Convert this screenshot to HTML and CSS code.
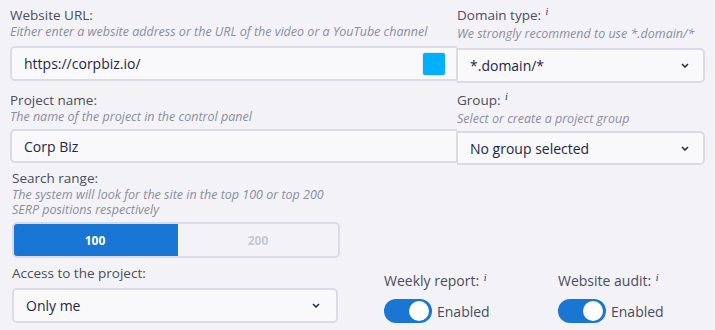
FILE: index.html
```html
<!DOCTYPE html>
<html>
<head>
<meta charset="utf-8">
<link rel="stylesheet" href="styles.css">
</head>
<body>
<div class="page">
  <div class="row">
    <div class="field">
      <div class="label">Website URL:</div>
      <div class="hint">Either enter a website address or the URL of the video or a YouTube channel</div>
      <div class="input input-left">
        <span class="value">https://corpbiz.io/</span>
        <span class="swatch"></span>
      </div>
    </div>
    <div class="field">
      <div class="label">Domain type: <i class="info">i</i></div>
      <div class="hint">We strongly recommend to use *.domain/*</div>
      <div class="input input-right">
        <span class="value">*.domain/*</span>
        <svg class="chev" width="8" height="5" viewBox="0 0 8 5"><path d="M1 1l3 3 3-3" fill="none" stroke="#1f2547" stroke-width="1.5"/></svg>
      </div>
    </div>
  </div>
  <div class="row row2">
    <div class="field">
      <div class="label">Project name:</div>
      <div class="hint">The name of the project in the control panel</div>
      <div class="input input-left short">
        <span class="value">Corp Biz</span>
      </div>
    </div>
    <div class="field">
      <div class="label">Group: <i class="info">i</i></div>
      <div class="hint">Select or create a project group</div>
      <div class="input input-right short">
        <span class="value">No group selected</span>
        <svg class="chev" width="8" height="5" viewBox="0 0 8 5"><path d="M1 1l3 3 3-3" fill="none" stroke="#1f2547" stroke-width="1.5"/></svg>
      </div>
    </div>
  </div>
  <div class="bottom">
    <div class="left-col">
      <div class="label">Search range:</div>
      <div class="hint multi">The system will look for the site in the top 100 or top 200 SERP positions respectively</div>
      <div class="seg">
        <div class="seg-item active">100</div>
        <div class="seg-item">200</div>
      </div>
      <div class="label access-label">Access to the project:</div>
      <div class="input select-access">
        <span class="value">Only me</span>
        <svg class="chev" width="8" height="5" viewBox="0 0 8 5"><path d="M1 1l3 3 3-3" fill="none" stroke="#1f2547" stroke-width="1.5"/></svg>
      </div>
    </div>
    <div class="toggle-field weekly">
      <div class="label">Weekly report: <i class="info">i</i></div>
      <div class="toggle-row"><span class="toggle"><span class="knob"></span></span><span class="toggle-text">Enabled</span></div>
    </div>
    <div class="toggle-field">
      <div class="label">Website audit: <i class="info">i</i></div>
      <div class="toggle-row"><span class="toggle"><span class="knob"></span></span><span class="toggle-text">Enabled</span></div>
    </div>
  </div>
</div>
</body>
</html>
```
FILE: styles.css
```css
html, body {
  margin: 0;
  padding: 0;
  background: #f3f3f7;
}
body {
  font-family: "Open Sans", "Lato", sans-serif;
  width: 715px;
  height: 330px;
  overflow: hidden;
}
.page {
  padding: 6px 10px 0 10px;
}
.row {
  display: grid;
  grid-template-columns: 447px 248px;
}
.row2 {
  margin-top: 8px;
}
.label {
  font-size: 13.5px;
  line-height: 18px;
  color: #4b4c5e;
  white-space: nowrap;
}
.info {
  font-size: 10px;
  font-family: "Liberation Serif", serif;
  position: relative;
  top: -5px;
  margin-left: 1px;
  color: #2b2e4a;
}
.hint {
  font-size: 12.5px;
  line-height: 16px;
  font-style: italic;
  color: #8b8d9c;
  white-space: nowrap;
}
.hint.multi {
  white-space: normal;
  width: 340px;
  line-height: 15px;
}
.input {
  box-sizing: border-box;
  height: 35px;
  margin-top: 6px;
  background: #f9f9fc;
  border: 2px solid #dadbe4;
  display: flex;
  align-items: center;
  padding: 0 12px;
  color: #1f2547;
  font-size: 14px;
}
.input.short {
  height: 34px;
  margin-top: 4px;
}
.input-left {
  border-radius: 5px 0 0 5px;
  border-right: 1px solid #dadbe4;
}
.input-right {
  border-radius: 0 5px 5px 0;
  border-left: 1px solid #dadbe4;
  justify-content: space-between;
  padding-right: 14px;
}
.value {
  flex: 1;
}
.swatch {
  width: 22px;
  height: 22px;
  background: #00b0ff;
  border: 1px solid #e4e6ee;
  border-radius: 3px;
  margin-right: -2px;
}
.chev {
  display: block;
}
.bottom {
  display: grid;
  grid-template-columns: 372px 174px 140px;
  margin-top: 4px;
  padding-left: 2px;
}
.seg {
  display: flex;
  height: 36px;
  margin-top: 5px;
  width: 328px;
  box-sizing: border-box;
  border-radius: 5px;
  overflow: hidden;
  border: 2px solid #dadbe4;
  background: #f3f3f7;
  font-size: 12px;
  font-weight: 700;
}
.seg-item {
  flex: 1;
  display: flex;
  align-items: center;
  justify-content: center;
  color: #c6c7d0;
}
.seg-item.active {
  background: #1976d2;
  color: #ffffff;
  margin: -2px 0 -2px -2px;
  flex: 0 0 166px;
}
.access-label {
  margin-top: 6px;
}
.select-access {
  width: 326px;
  height: 35px;
  margin-top: 6px;
  border-radius: 5px;
  justify-content: space-between;
  padding-right: 16px;
}
.toggle-field {
  align-self: end;
}
.toggle-field .label {
  font-size: 14px;
}
.toggle-row {
  display: flex;
  align-items: center;
  margin-top: 7px;
  margin-bottom: 0;
}
.toggle {
  width: 48px;
  height: 24px;
  border-radius: 12px;
  background: #1976d2;
  position: relative;
  display: block;
}
.knob {
  position: absolute;
  right: 3px;
  top: 2px;
  width: 20px;
  height: 20px;
  border-radius: 50%;
  background: #ffffff;
}
.toggle-text {
  margin-left: 5px;
  font-size: 14px;
  color: #4b4c5e;
}
```
